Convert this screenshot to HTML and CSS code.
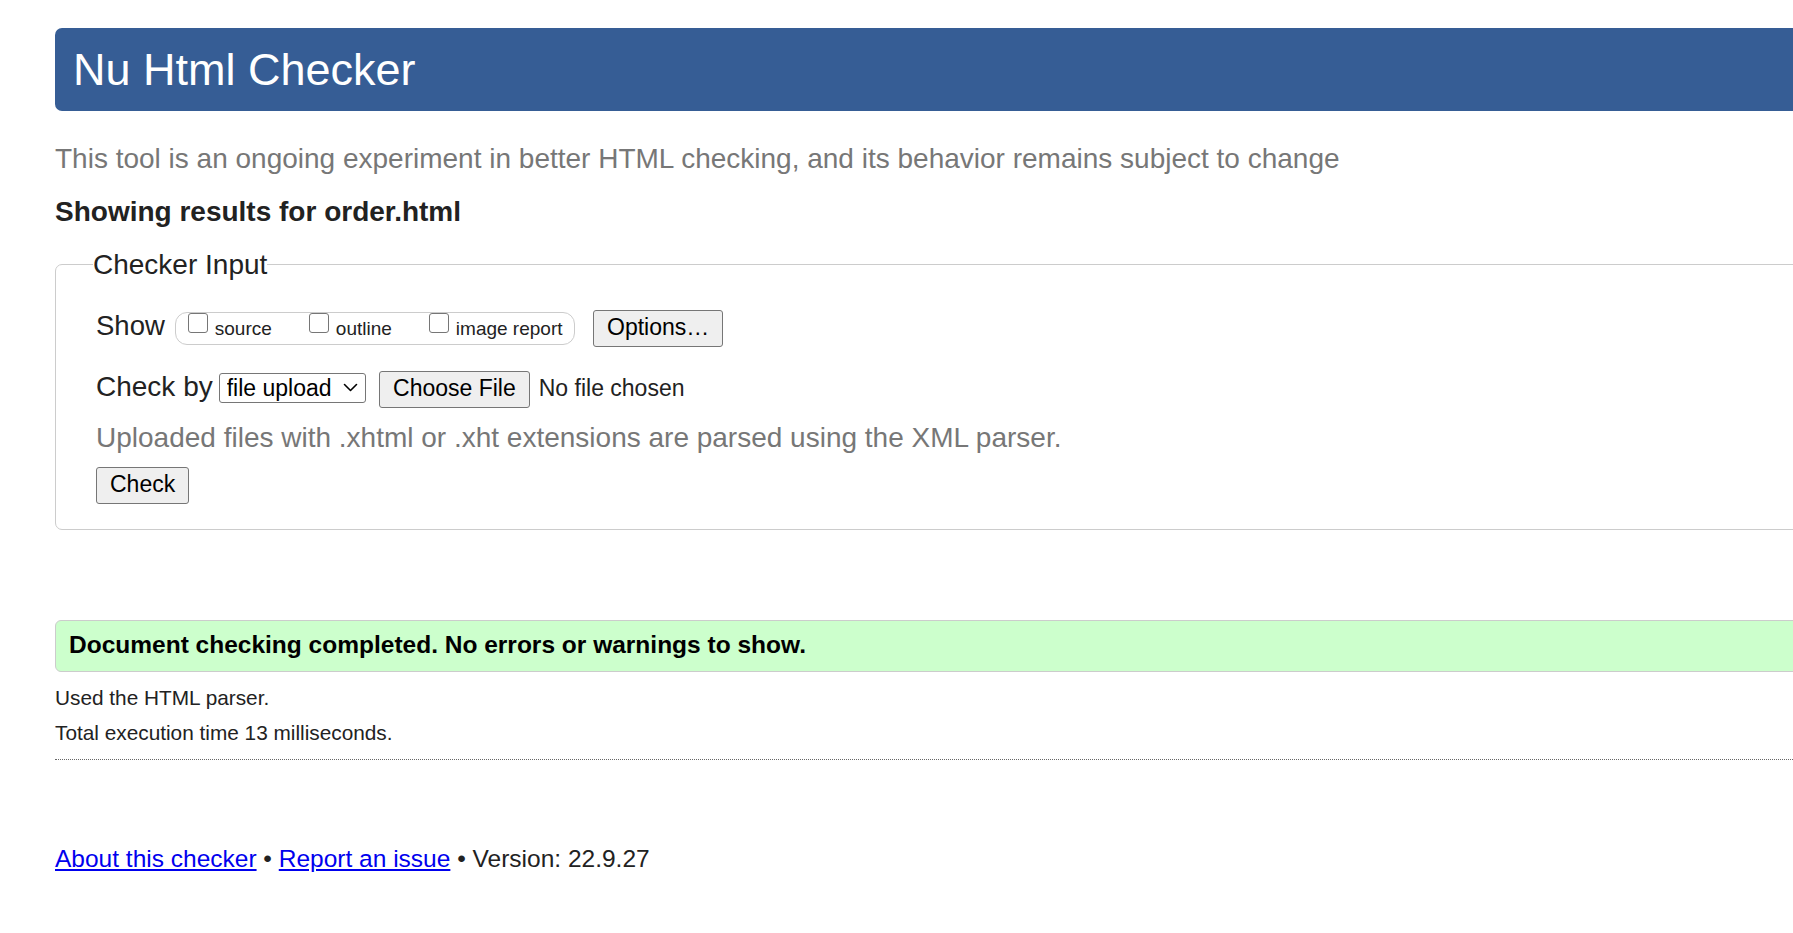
FILE: index.html
```html
<!DOCTYPE html>
<html lang="en">
<head>
<meta charset="utf-8">
<title>Showing results for order.html - Nu Html Checker</title>
<link rel="stylesheet" href="styles.css">
</head>
<body>
<div class="page">
  <h1 class="masthead">Nu Html Checker</h1>
  <p class="tagline">This tool is an ongoing experiment in better HTML checking, and its behavior remains subject to change</p>
  <p class="results-for">Showing results for order.html</p>
  <form class="checker-form" onsubmit="return false">
    <fieldset class="checker-input">
      <legend>Checker Input</legend>
      <div class="row row-show">
        <span class="label">Show</span>
        <span class="show-options">
          <label class="opt"><input type="checkbox" class="cb">source</label>
          <label class="opt"><input type="checkbox" class="cb">outline</label>
          <label class="opt"><input type="checkbox" class="cb">image report</label>
        </span>
        <button type="button" class="btn btn-options">Options…</button>
      </div>
      <div class="row row-checkby">
        <span class="label label-checkby">Check by</span>
        <span class="select-wrap">
          <select class="select"><option>file upload</option></select>
          <svg class="chevron" width="15" height="9" viewBox="0 0 15 9" aria-hidden="true"><polyline points="1.5,1.5 7.5,7.5 13.5,1.5" fill="none" stroke="#000" stroke-width="1.6" stroke-linecap="round" stroke-linejoin="round"/></svg>
        </span>
        <button type="button" class="btn btn-file">Choose File</button>
        <span class="file-status">No file chosen</span>
      </div>
      <p class="hint">Uploaded files with .xhtml or .xht extensions are parsed using the XML parser.</p>
      <div class="row row-submit">
        <button type="submit" class="btn">Check</button>
      </div>
    </fieldset>
  </form>
  <div class="success">Document checking completed. No errors or warnings to show.</div>
  <p class="meta">Used the HTML parser.</p>
  <p class="meta meta-next">Total execution time 13 milliseconds.</p>
  <hr class="sep">
  <p class="footer"><a href="#">About this checker</a> • <a href="#">Report an issue</a> • Version: 22.9.27</p>
</div>
</body>
</html>
```
FILE: styles.css
```css
html, body {
  margin: 0;
  padding: 0;
  background: #fff;
  overflow: hidden;
}

body {
  font-family: "Liberation Sans", Arial, sans-serif;
  color: #222;
}

.page {
  margin: 28px -60px 0 55px;
}

.masthead {
  margin: 0;
  height: 83px;
  line-height: 83px;
  padding-left: 18px;
  background: #365d95;
  color: #fff;
  font-size: 45px;
  font-weight: normal;
  border-radius: 7px;
}

.tagline {
  margin: 30.7px 0 0;
  font-size: 28px;
  line-height: 33px;
  color: #777;
}

.results-for {
  margin: 20.8px 0 0;
  font-size: 28px;
  line-height: 33px;
  font-weight: bold;
  color: #222;
}

.checker-form {
  margin: 20px 0 0;
}

.checker-input {
  margin: 0;
  min-width: 0;
  padding: 28px 0 25px 40px;
  border: 1px solid #ccc;
  border-radius: 7px;
}

.checker-input legend {
  padding: 0;
  margin-left: -3px;
  font-size: 28px;
  line-height: 33px;
  color: #222;
}

.row {
  display: flex;
  align-items: baseline;
  white-space: nowrap;
}

.label {
  font-size: 27.5px;
  line-height: 33px;
  color: #222;
}

.row-show .label {
  margin-right: 10px;
}

.show-options {
  display: flex;
  align-items: baseline;
  height: 31px;
  line-height: 31px;
  padding: 0 11px 0 12px;
  border: 1px solid #ccc;
  border-radius: 12px;
  font-size: 19px;
  color: #222;
}

.opt {
  display: block;
}

.opt + .opt {
  margin-left: 37px;
}

.cb {
  appearance: none;
  -webkit-appearance: none;
  display: inline-block;
  box-sizing: border-box;
  width: 20px;
  height: 20px;
  margin: 0 7px 2px 0;
  border: 1.5px solid #767676;
  border-radius: 3px;
  background: #fff;
  vertical-align: baseline;
}

.btn {
  margin: 0;
  padding: 3px 13px 5px;
  font-family: inherit;
  font-size: 23px;
  line-height: 27px;
  color: #000;
  background: #efefef;
  border: 1px solid #767676;
  border-radius: 3px;
}

.btn-options {
  margin-left: 18.5px;
}

.row-checkby {
  margin-top: 23px;
}

.label-checkby {
  font-size: 28px;
  margin-right: 6px;
}

.select-wrap {
  position: relative;
  display: inline-block;
  margin-right: 13.3px;
}

.select {
  appearance: none;
  -webkit-appearance: none;
  box-sizing: border-box;
  width: 147px;
  height: 30px;
  margin: 0;
  padding: 0 0 0 7px;
  font-family: inherit;
  font-size: 23px;
  line-height: 28px;
  color: #000;
  background: #fff;
  border: 1px solid #767676;
  border-radius: 3px;
}

.chevron {
  position: absolute;
  right: 8px;
  top: 10px;
  pointer-events: none;
}

.file-status {
  margin-left: 9px;
  font-size: 23px;
  line-height: 27px;
  color: #222;
}

.hint {
  margin: 12.5px 0 0;
  font-size: 28px;
  line-height: 33px;
  color: #777;
}

.row-submit {
  margin-top: 13.5px;
}

.success {
  margin-top: 90px;
  padding: 9px 12px 11px 13px;
  background: #ccffcc;
  border: 1px solid #ccc;
  border-radius: 6px;
  font-size: 24.5px;
  line-height: 30px;
  font-weight: bold;
  color: #000;
}

.meta {
  margin: 13.2px 0 0;
  font-size: 20.8px;
  line-height: 24px;
  color: #222;
}

.meta-next {
  margin-top: 11.4px;
}

.sep {
  height: 0;
  margin: 13.5px 0 0;
  border: 0;
  border-top: 1px dotted #666;
}

.footer {
  margin: 84.5px 0 0;
  font-size: 24.5px;
  line-height: 30px;
  color: #222;
}

.footer a {
  color: #0000ee;
  text-decoration: underline;
}
```
